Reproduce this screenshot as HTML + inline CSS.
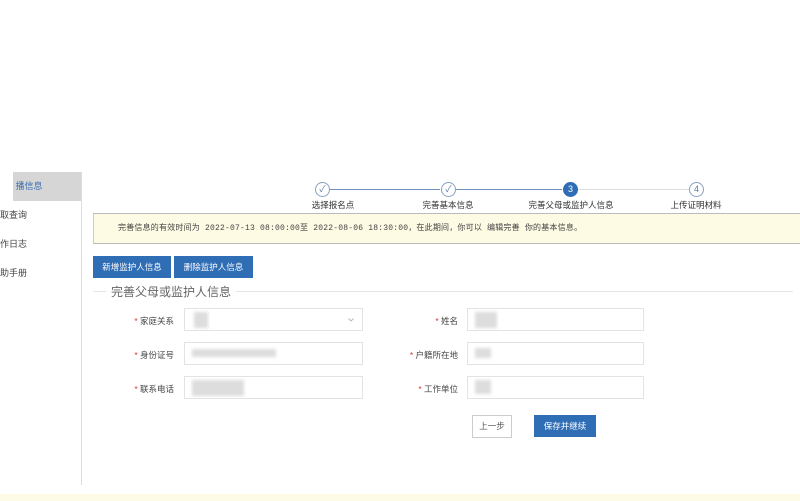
<!DOCTYPE html><html><head><meta charset="utf-8"><style>
*{margin:0;padding:0;box-sizing:border-box}
body{width:800px;height:501px;background:#fff;position:relative;overflow:hidden;font-family:"Liberation Sans","Noto Sans CJK SC",sans-serif;font-size:9px;color:#333}
.a{position:absolute}
.side{left:0;top:172px;width:82px;height:313px;border-right:1px solid #ddd}
.si{position:absolute;left:0;width:68px;height:29px;line-height:29px;font-size:9px;color:#444}
.inp{position:absolute;height:23px;border:1px solid #e3e3e3;background:#fff}
.blur{position:absolute;background:#ddd;filter:blur(1.5px)}
.lab{position:absolute;width:70px;text-align:right;font-size:8.5px;color:#444}
.lab b{color:#d33;font-weight:normal}
.btn{position:absolute;background:#2f6db5;color:#fff;font-size:8.5px;text-align:center;line-height:22px}
.c{position:absolute;width:15px;height:15px;border-radius:50%;border:1px solid #8aa0bd;font-size:9px;text-align:center;line-height:13px;color:#5a7aa8;background:#fff}
.sl{position:absolute;font-size:8.5px;color:#333;text-align:center;width:100px}
</style></head><body>
<div class="a side">
<div class="si" style="top:0;left:13px;background:#d6d6d6;color:#3a6db0">&nbsp;播信息</div>
<div class="si" style="top:29px">取查询</div>
<div class="si" style="top:58px">作日志</div>
<div class="si" style="top:87px">助手册</div>
</div>
<div class="a" style="left:330px;top:189px;width:110px;height:1px;background:#6f8fbf"></div>
<div class="a" style="left:456px;top:189px;width:106px;height:1px;background:#6f8fbf"></div>
<div class="a" style="left:578px;top:189px;width:112px;height:1px;background:#ddd"></div>
<div class="c" style="left:315px;top:182px">✓</div>
<div class="c" style="left:441px;top:182px">✓</div>
<div class="c" style="left:563px;top:182px;background:#2f6db5;border-color:#2f6db5;color:#fff">3</div>
<div class="c" style="left:689px;top:182px">4</div>
<div class="sl" style="left:283px;top:199px">选择报名点</div>
<div class="sl" style="left:398px;top:199px">完善基本信息</div>
<div class="sl" style="left:521px;top:199px">完善父母或监护人信息</div>
<div class="sl" style="left:646px;top:199px">上传证明材料</div>
<div class="a" style="left:93px;top:213px;width:710px;height:31px;background:#fdfbe3;border:1px solid #bbb;border-left-color:#ccc;font-family:'Liberation Mono','Noto Sans CJK SC',monospace;font-size:8px;line-height:29px;padding-left:24px;color:#444;letter-spacing:0.2px">完善信息的有效时间为 2022-07-13 08:00:00至 2022-08-06 18:30:00，在此期间，你可以 编辑完善 你的基本信息。</div>
<div class="btn" style="left:93px;top:256px;width:78px">新增监护人信息</div>
<div class="btn" style="left:174px;top:256px;width:79px">删除监护人信息</div>
<div class="a" style="left:93px;top:291px;width:700px;height:1px;background:#e5e5e5"></div>
<div class="a" style="left:106px;top:283px;background:#fff;padding:0 5px;font-size:12px;color:#666">完善父母或监护人信息</div>
<div class="lab" style="left:104px;top:315px"><b>* </b>家庭关系</div>
<div class="lab" style="left:104px;top:349px"><b>* </b>身份证号</div>
<div class="lab" style="left:104px;top:383px"><b>* </b>联系电话</div>
<div class="lab" style="left:388px;top:315px"><b>* </b>姓名</div>
<div class="lab" style="left:388px;top:349px"><b>* </b>户籍所在地</div>
<div class="lab" style="left:388px;top:383px"><b>* </b>工作单位</div>
<div class="inp" style="left:184px;top:308px;width:179px"><svg style="position:absolute;right:8px;top:9px" width="6" height="4"><path d="M0.5 0.5L3 3L5.5 0.5" stroke="#bbb" fill="none"/></svg></div>
<div class="inp" style="left:184px;top:342px;width:179px"></div>
<div class="inp" style="left:184px;top:376px;width:179px"></div>
<div class="inp" style="left:467px;top:308px;width:177px"></div>
<div class="inp" style="left:467px;top:342px;width:177px"></div>
<div class="inp" style="left:467px;top:376px;width:177px"></div>
<div class="blur" style="left:194px;top:312px;width:14px;height:16px"></div>
<div class="blur" style="left:192px;top:349px;width:84px;height:8px"></div>
<div class="blur" style="left:192px;top:380px;width:52px;height:16px"></div>
<div class="blur" style="left:475px;top:312px;width:22px;height:16px"></div>
<div class="blur" style="left:475px;top:348px;width:16px;height:10px"></div>
<div class="blur" style="left:475px;top:380px;width:16px;height:14px"></div>
<div class="a" style="left:472px;top:415px;width:40px;height:23px;border:1px solid #ccc;text-align:center;line-height:21px;font-size:8.5px;color:#555">上一步</div>
<div class="btn" style="left:534px;top:415px;width:62px;height:22px">保存并继续</div>
<div class="a" style="left:0;top:494px;width:800px;height:7px;background:#fdfbe6"></div>
</body></html>
